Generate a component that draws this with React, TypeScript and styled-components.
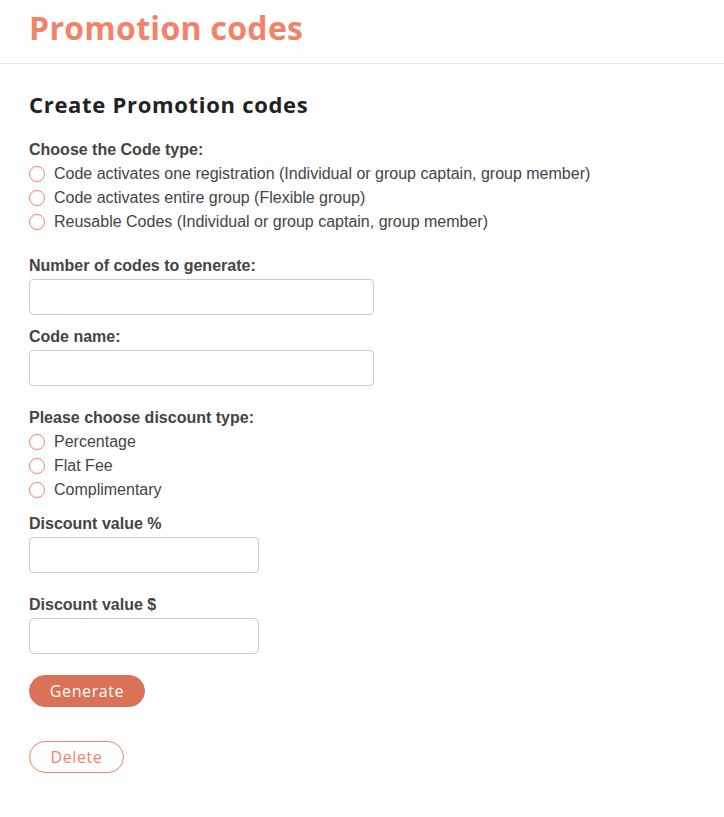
import React from 'react';
import styled, { createGlobalStyle } from 'styled-components';

const BODY_FONT = "'Liberation Sans', Arial, Helvetica, sans-serif";
const HEAD_FONT = "'Open Sans', 'DejaVu Sans', sans-serif";
const CORAL = '#f1836a';
const CORAL_DARK = '#d97257';

const GlobalStyle = createGlobalStyle`
  html, body {
    margin: 0;
    padding: 0;
    background: #ffffff;
  }
  body {
    font-family: ${BODY_FONT};
    color: #444444;
  }
  * {
    box-sizing: border-box;
  }
`;

const Header = styled.header`
  height: 64px;
  padding: 0 29px;
  border-bottom: 1px solid #e8e8e8;
  display: flex;
  align-items: center;
`;

const PageTitle = styled.h1`
  margin: 0 0 8px;
  font-family: ${HEAD_FONT};
  font-size: 32px;
  font-weight: 700;
  line-height: 36px;
  letter-spacing: 0.3px;
  color: ${CORAL};
`;

const Main = styled.main`
  padding: 26px 29px 40px;
  display: flex;
  flex-direction: column;
  align-items: flex-start;
`;

const SectionTitle = styled.h2`
  margin: 0;
  font-family: ${HEAD_FONT};
  font-size: 22px;
  font-weight: 700;
  line-height: 28px;
  letter-spacing: 0.7px;
  color: #222222;
`;

const Label = styled.div<{ $top: number }>`
  margin-top: ${(p) => p.$top}px;
  font-size: 16px;
  font-weight: 700;
  line-height: 20px;
  color: #444444;
`;

const RadioList = styled.div`
  margin-top: 2px;
  display: flex;
  flex-direction: column;
`;

const RadioRow = styled.label`
  display: flex;
  align-items: center;
  gap: 9px;
  height: 24px;
  font-size: 16px;
  color: #444444;
  cursor: pointer;
`;

const RadioCircle = styled.span`
  width: 16px;
  height: 16px;
  border-radius: 50%;
  border: 1.5px solid ${CORAL};
  background: #ffffff;
  flex-shrink: 0;
`;

const Input = styled.input<{ $width: number }>`
  margin-top: 3px;
  width: ${(p) => p.$width}px;
  height: 36px;
  border: 1px solid #cccccc;
  border-radius: 4px;
  padding: 0 10px;
  font-family: ${BODY_FONT};
  font-size: 15px;
  outline: none;
`;

const Button = styled.button<{ $filled?: boolean; $width: number; $top: number }>`
  margin-top: ${(p) => p.$top}px;
  width: ${(p) => p.$width}px;
  height: 32px;
  border-radius: 16px;
  font-family: ${HEAD_FONT};
  font-size: 16px;
  font-weight: 500;
  letter-spacing: 0.6px;
  cursor: pointer;
  border: 1px solid ${(p) => (p.$filled ? CORAL_DARK : CORAL)};
  background: ${(p) => (p.$filled ? CORAL_DARK : '#ffffff')};
  color: ${(p) => (p.$filled ? '#ffffff' : CORAL)};
`;

const Radio: React.FC<{ label: string }> = ({ label }) => (
  <RadioRow>
    <RadioCircle />
    {label}
  </RadioRow>
);

const App: React.FC = () => (
  <>
    <GlobalStyle />
    <Header>
      <PageTitle>Promotion codes</PageTitle>
    </Header>
    <Main>
      <SectionTitle>Create Promotion codes</SectionTitle>

      <Label $top={22}>Choose the Code type:</Label>
      <RadioList>
        <Radio label="Code activates one registration (Individual or group captain, group member)" />
        <Radio label="Code activates entire group (Flexible group)" />
        <Radio label="Reusable Codes (Individual or group captain, group member)" />
      </RadioList>

      <Label $top={22}>Number of codes to generate:</Label>
      <Input $width={345} />

      <Label $top={12}>Code name:</Label>
      <Input $width={345} />

      <Label $top={22}>Please choose discount type:</Label>
      <RadioList>
        <Radio label="Percentage" />
        <Radio label="Flat Fee" />
        <Radio label="Complimentary" />
      </RadioList>

      <Label $top={12}>Discount value %</Label>
      <Input $width={230} />

      <Label $top={22}>Discount value $</Label>
      <Input $width={230} />

      <Button $filled $width={116} $top={21}>Generate</Button>
      <Button $width={95} $top={34}>Delete</Button>
    </Main>
  </>
);

export default App;
